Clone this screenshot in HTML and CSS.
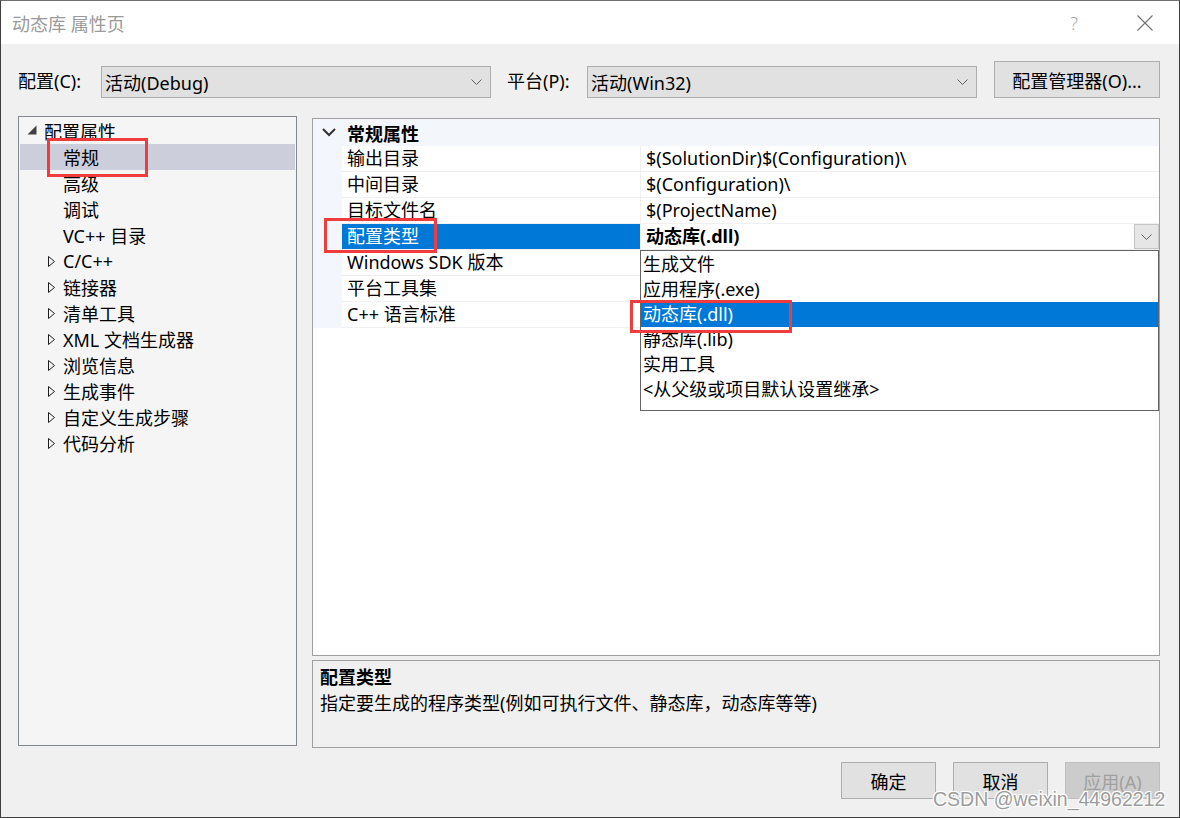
FILE: index.html
```html
<!DOCTYPE html>
<html lang="zh-CN">
<head>
    <meta charset="UTF-8">
    <title>动态库 属性页</title>
    <link rel="stylesheet" href="styles.css">
</head>
<body>
    <div class="window">
        <div class="titlebar">
            <span class="title">动态库 属性页</span>
            <span class="help">?</span>
            <span class="close">
                <svg width="16" height="16" viewBox="0 0 16 16"><path d="M0.5 0.5 L15.5 15.5 M15.5 0.5 L0.5 15.5" stroke="#707070" stroke-width="1.1" fill="none"/></svg>
            </span>
        </div>

        <div class="config-row">
            <span class="label">配置(C):</span>
            <div class="combo">
                <span>活动(Debug)</span>
                <svg class="chev" width="11" height="6" viewBox="0 0 11 6"><path d="M0.5 0.5 L5.5 5.5 L10.5 0.5" stroke="#606060" fill="none"/></svg>
            </div>
            <span class="label label-platform">平台(P):</span>
            <div class="combo">
                <span>活动(Win32)</span>
                <svg class="chev" width="11" height="6" viewBox="0 0 11 6"><path d="M0.5 0.5 L5.5 5.5 L10.5 0.5" stroke="#606060" fill="none"/></svg>
            </div>
            <button class="btn btn-manager">配置管理器(O)...</button>
        </div>

        <div class="main">
            <div class="tree">
                <div class="tree-row level0">
                    <span class="arrow"><svg width="10" height="10" viewBox="0 0 10 10"><path d="M9.5 0.5 L9.5 9.5 L0.5 9.5 Z" fill="#404040"/></svg></span>
                    <span>配置属性</span>
                </div>
                <div class="tree-row level1 selected"><span class="arrow"></span><span>常规</span></div>
                <div class="tree-row level1"><span class="arrow"></span><span>高级</span></div>
                <div class="tree-row level1"><span class="arrow"></span><span>调试</span></div>
                <div class="tree-row level1"><span class="arrow"></span><span>VC++ 目录</span></div>
                <div class="tree-row level1"><span class="arrow closed"><svg width="7" height="11" viewBox="0 0 7 11"><path d="M0.5 0.5 L6.5 5.5 L0.5 10.5 Z" fill="none" stroke="#1e1e1e"/></svg></span><span>C/C++</span></div>
                <div class="tree-row level1"><span class="arrow closed"><svg width="7" height="11" viewBox="0 0 7 11"><path d="M0.5 0.5 L6.5 5.5 L0.5 10.5 Z" fill="none" stroke="#1e1e1e"/></svg></span><span>链接器</span></div>
                <div class="tree-row level1"><span class="arrow closed"><svg width="7" height="11" viewBox="0 0 7 11"><path d="M0.5 0.5 L6.5 5.5 L0.5 10.5 Z" fill="none" stroke="#1e1e1e"/></svg></span><span>清单工具</span></div>
                <div class="tree-row level1"><span class="arrow closed"><svg width="7" height="11" viewBox="0 0 7 11"><path d="M0.5 0.5 L6.5 5.5 L0.5 10.5 Z" fill="none" stroke="#1e1e1e"/></svg></span><span>XML 文档生成器</span></div>
                <div class="tree-row level1"><span class="arrow closed"><svg width="7" height="11" viewBox="0 0 7 11"><path d="M0.5 0.5 L6.5 5.5 L0.5 10.5 Z" fill="none" stroke="#1e1e1e"/></svg></span><span>浏览信息</span></div>
                <div class="tree-row level1"><span class="arrow closed"><svg width="7" height="11" viewBox="0 0 7 11"><path d="M0.5 0.5 L6.5 5.5 L0.5 10.5 Z" fill="none" stroke="#1e1e1e"/></svg></span><span>生成事件</span></div>
                <div class="tree-row level1"><span class="arrow closed"><svg width="7" height="11" viewBox="0 0 7 11"><path d="M0.5 0.5 L6.5 5.5 L0.5 10.5 Z" fill="none" stroke="#1e1e1e"/></svg></span><span>自定义生成步骤</span></div>
                <div class="tree-row level1"><span class="arrow closed"><svg width="7" height="11" viewBox="0 0 7 11"><path d="M0.5 0.5 L6.5 5.5 L0.5 10.5 Z" fill="none" stroke="#1e1e1e"/></svg></span><span>代码分析</span></div>
            </div>

            <div class="right">
                <div class="grid">
                    <div class="grid-header">
                        <svg class="hchev" width="14" height="9" viewBox="0 0 14 9"><path d="M1 1 L7 7 L13 1" stroke="#333" stroke-width="2" fill="none"/></svg>
                        <span>常规属性</span>
                    </div>
                    <div class="prop-row"><span class="gutter"></span><span class="name">输出目录</span><span class="value">$(SolutionDir)$(Configuration)\</span></div>
                    <div class="prop-row"><span class="gutter"></span><span class="name">中间目录</span><span class="value">$(Configuration)\</span></div>
                    <div class="prop-row"><span class="gutter"></span><span class="name">目标文件名</span><span class="value">$(ProjectName)</span></div>
                    <div class="prop-row selected">
                        <span class="gutter"></span><span class="name">配置类型</span>
                        <span class="value"><b>动态库(.dll)</b>
                            <span class="drop-btn"><svg width="11" height="6" viewBox="0 0 11 6"><path d="M0.5 0.5 L5.5 5.5 L10.5 0.5" stroke="#606060" fill="none"/></svg></span>
                        </span>
                    </div>
                    <div class="prop-row"><span class="gutter"></span><span class="name">Windows SDK 版本</span><span class="value"></span></div>
                    <div class="prop-row"><span class="gutter"></span><span class="name">平台工具集</span><span class="value"></span></div>
                    <div class="prop-row"><span class="gutter"></span><span class="name">C++ 语言标准</span><span class="value"></span></div>

                    <div class="dropdown">
                        <div class="item">生成文件</div>
                        <div class="item">应用程序(.exe)</div>
                        <div class="item active">动态库(.dll)</div>
                        <div class="item">静态库(.lib)</div>
                        <div class="item">实用工具</div>
                        <div class="item">&lt;从父级或项目默认设置继承&gt;</div>
                    </div>
                </div>
                <div class="desc">
                    <div class="desc-title">配置类型</div>
                    <div>指定要生成的程序类型(例如可执行文件、静态库，动态库等等)</div>
                </div>
            </div>
        </div>

        <div class="buttons">
            <button class="btn">确定</button>
            <button class="btn">取消</button>
            <button class="btn disabled">应用(A)</button>
        </div>

        <div class="mark mark-general"></div>
        <div class="mark mark-type"></div>
        <div class="mark mark-dll"></div>
        <div class="watermark">CSDN @weixin_44962212</div>
    </div>
</body>
</html>
```

FILE: styles.css
```css
body {
    margin: 0;
    font-family: "Noto Sans", "Noto Sans CJK SC", sans-serif;
    font-size: 18px;
    color: #000;
    background-color: #f0f0f0;
}
.window {
    position: relative;
    width: 1180px;
    height: 818px;
    box-sizing: border-box;
    border: 1px solid #3f3f3f;
    border-top-color: #707070;
    background-color: #f0f0f0;
    display: flex;
    flex-direction: column;
    overflow: hidden;
}

/* title bar */
.titlebar {
    height: 43px;
    flex: none;
    background-color: #fff;
    display: flex;
    align-items: center;
    padding-left: 11px;
}
.title {
    color: #9a9a9a;
    flex: 1;
}
.help {
    color: #a8a8a8;
    font-weight: 300;
    margin-right: 59px;
}
.close {
    display: flex;
    margin-right: 26px;
}

/* config row */
.config-row {
    flex: none;
    height: 37px;
    margin-top: 17px;
    padding-left: 17px;
    display: flex;
    align-items: center;
}
.label {
    width: 83px;
    margin-top: 1px;
}
.label-platform {
    width: 80px;
    margin-left: 16px;
}
.combo {
    width: 390px;
    height: 32px;
    box-sizing: border-box;
    border: 1px solid #adadad;
    background-color: #e1e1e1;
    display: flex;
    align-items: center;
    justify-content: space-between;
    padding: 0 8px 0 3px;
    margin-top: 4px;
}
.btn {
    font-family: inherit;
    font-size: 18px;
    color: #000;
    width: 95px;
    height: 37px;
    box-sizing: border-box;
    border: 1px solid #adadad;
    background-color: #e1e1e1;
    padding: 0;
}
.btn-manager {
    width: 166px;
    margin-left: 17px;
}
.btn.disabled {
    background-color: #cccccc;
    border-color: #bfbfbf;
    color: #a0a0a0;
}

/* main area */
.main {
    flex: none;
    margin-top: 18px;
    padding-left: 17px;
    display: flex;
    gap: 15px;
    align-items: flex-start;
}
.tree {
    width: 279px;
    height: 630px;
    box-sizing: border-box;
    border: 1px solid #828790;
    background-color: #f5f5f5;
    padding: 1px;
}
.tree-row {
    height: 26px;
    display: flex;
    align-items: center;
    white-space: nowrap;
}
.tree-row.selected {
    background-color: #cccedb;
}
.level0 {
    padding-left: 5px;
}
.level1 {
    padding-left: 24px;
}
.arrow {
    width: 19px;
    flex: none;
    display: flex;
    align-items: center;
}
.level0 .arrow svg {
    margin-left: 2px;
    margin-top: -2px;
}
.arrow.closed svg {
    margin-left: 4px;
}

.right {
    width: 848px;
    margin-top: 2px;
    display: flex;
    flex-direction: column;
    gap: 4px;
}
.grid {
    position: relative;
    height: 538px;
    box-sizing: border-box;
    border: 1px solid #a0a0a0;
    background-color: #fff;
}
.grid-header {
    height: 27px;
    background-color: #f3f6fb;
    display: flex;
    align-items: center;
    font-weight: 700;
}
.hchev {
    margin-left: 9px;
    margin-right: 11px;
}
.prop-row {
    height: 26px;
    display: flex;
    white-space: nowrap;
}
.gutter {
    width: 29px;
    flex: none;
    background-color: #f3f6fb;
}
.name {
    width: 299px;
    flex: none;
    box-sizing: border-box;
    padding-left: 5px;
    line-height: 25px;
    border-bottom: 1px solid #f0f0f0;
    border-right: 1px solid #f0f0f0;
}
.value {
    flex: 1;
    padding-left: 5px;
    line-height: 25px;
    border-bottom: 1px solid #f0f0f0;
    display: flex;
    justify-content: space-between;
}
.prop-row.selected .name {
    background-color: #0078d7;
    color: #fff;
}
.drop-btn {
    width: 25px;
    height: 25px;
    box-sizing: border-box;
    border: 1px solid #c5c5c5;
    background-color: #e6e6e6;
    display: flex;
    align-items: center;
    justify-content: center;
}
.dropdown {
    position: absolute;
    left: 327px;
    top: 131px;
    width: 519px;
    height: 161px;
    box-sizing: border-box;
    border: 1px solid #646464;
    background-color: #fff;
    padding-top: 1px;
}
.dropdown .item {
    height: 25px;
    line-height: 25px;
    padding-left: 2px;
    white-space: nowrap;
}
.dropdown .item.active {
    background-color: #0078d7;
    color: #fff;
}

.desc {
    height: 88px;
    box-sizing: border-box;
    border: 1px solid #a0a0a0;
    background-color: #f0f0f0;
    padding: 3px 7px;
    line-height: 26px;
}
.desc-title {
    font-weight: 700;
}

.buttons {
    flex: none;
    margin-top: 14px;
    padding-right: 19px;
    display: flex;
    justify-content: flex-end;
    gap: 17px;
}

/* annotations drawn over the dialog */
.mark {
    position: absolute;
    box-sizing: border-box;
    border: 3px solid #f03c3c;
}
.mark-general {
    left: 46px;
    top: 137px;
    width: 101px;
    height: 39px;
}
.mark-type {
    left: 323px;
    top: 217px;
    width: 113px;
    height: 35px;
}
.mark-dll {
    left: 629px;
    top: 299px;
    width: 162px;
    height: 33px;
}
.watermark {
    position: absolute;
    left: 932px;
    top: 787px;
    font-family: "Liberation Sans", Arial, sans-serif;
    font-size: 19.5px;
    color: #9c9c9c;
    text-shadow: 1px 1px 0 #fff, -1px -1px 0 #fff, 1px -1px 0 #fff, -1px 1px 0 #fff;
    white-space: nowrap;
}
```
